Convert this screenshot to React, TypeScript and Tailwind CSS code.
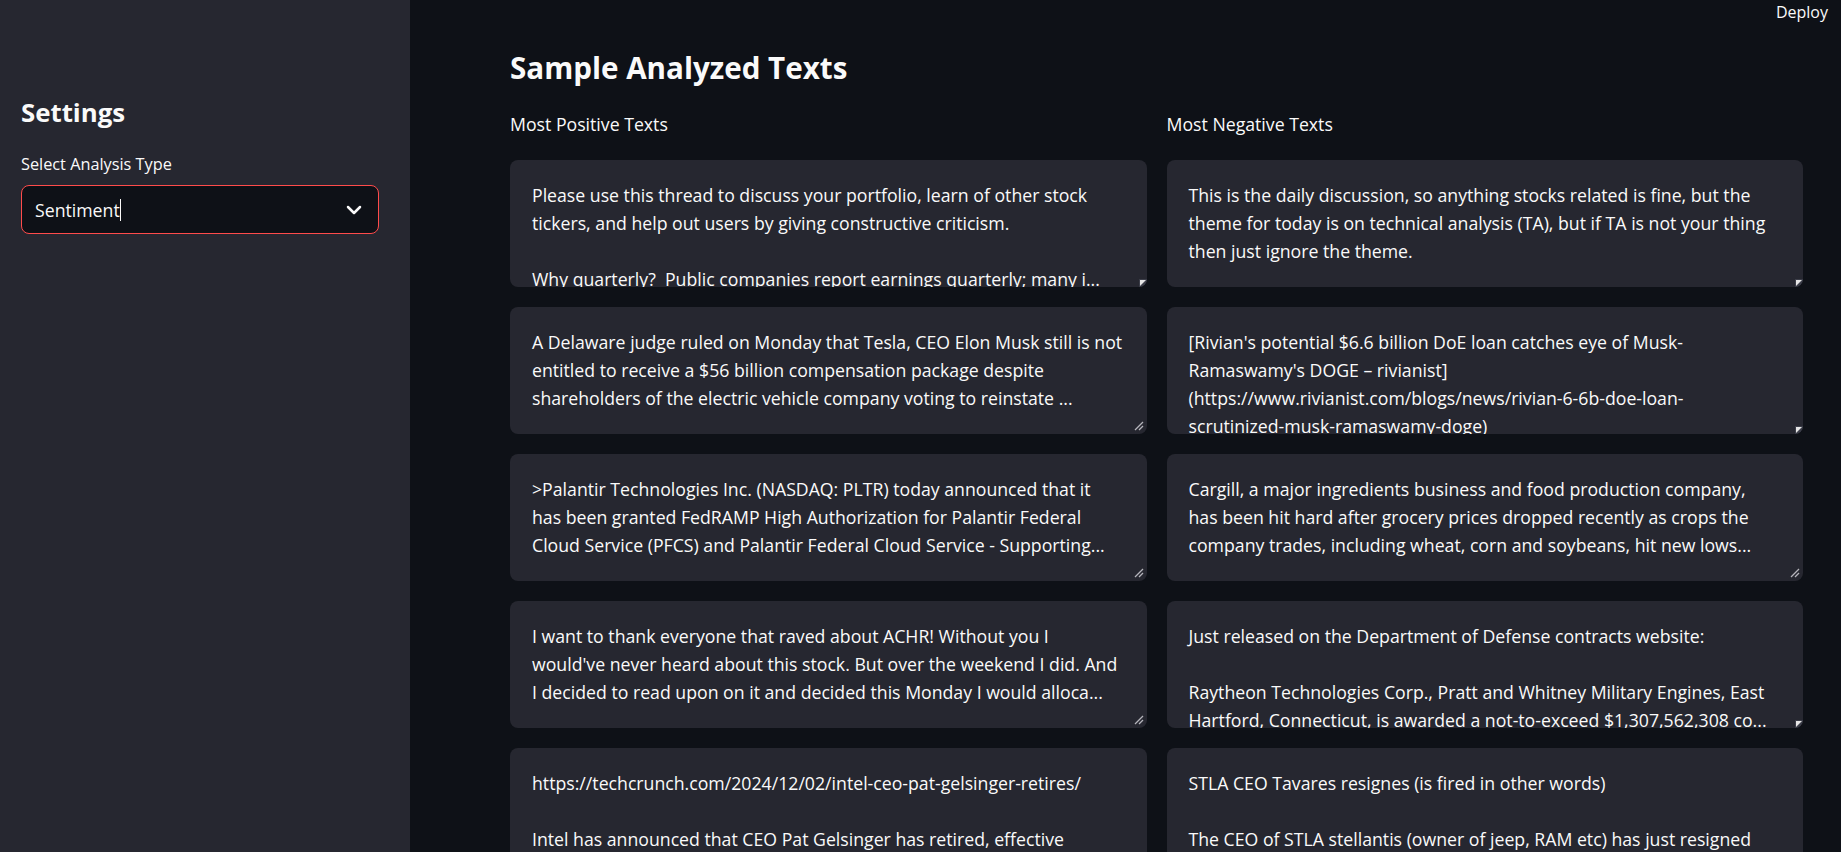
import { ChevronDown } from 'lucide-react'

type Sample = { lines: string[]; handle: 'tri' | 'grip' }

const positive: Sample[] = [
  {
    lines: [
      'Please use this thread to discuss your portfolio, learn of other stock',
      'tickers, and help out users by giving constructive criticism.',
      '',
      'Why quarterly?  Public companies report earnings quarterly; many i...',
    ],
    handle: 'tri',
  },
  {
    lines: [
      'A Delaware judge ruled on Monday that Tesla, CEO Elon Musk still is not',
      'entitled to receive a $56 billion compensation package despite',
      'shareholders of the electric vehicle company voting to reinstate ...',
    ],
    handle: 'grip',
  },
  {
    lines: [
      '>Palantir Technologies Inc. (NASDAQ: PLTR) today announced that it',
      'has been granted FedRAMP High Authorization for Palantir Federal',
      'Cloud Service (PFCS) and Palantir Federal Cloud Service - Supporting...',
    ],
    handle: 'grip',
  },
  {
    lines: [
      'I want to thank everyone that raved about ACHR! Without you I',
      "would've never heard about this stock. But over the weekend I did. And",
      'I decided to read upon on it and decided this Monday I would alloca...',
    ],
    handle: 'grip',
  },
  {
    lines: [
      'https://techcrunch.com/2024/12/02/intel-ceo-pat-gelsinger-retires/',
      '',
      'Intel has announced that CEO Pat Gelsinger has retired, effective',
      'December 1, 2024.',
    ],
    handle: 'tri',
  },
]

const negative: Sample[] = [
  {
    lines: [
      'This is the daily discussion, so anything stocks related is fine, but the',
      'theme for today is on technical analysis (TA), but if TA is not your thing',
      'then just ignore the theme.',
    ],
    handle: 'tri',
  },
  {
    lines: [
      "[Rivian's potential $6.6 billion DoE loan catches eye of Musk-",
      "Ramaswamy's DOGE – rivianist]",
      '(https://www.rivianist.com/blogs/news/rivian-6-6b-doe-loan-',
      'scrutinized-musk-ramaswamy-doge)',
    ],
    handle: 'tri',
  },
  {
    lines: [
      'Cargill, a major ingredients business and food production company,',
      'has been hit hard after grocery prices dropped recently as crops the',
      'company trades, including wheat, corn and soybeans, hit new lows...',
    ],
    handle: 'grip',
  },
  {
    lines: [
      'Just released on the Department of Defense contracts website:',
      '',
      'Raytheon Technologies Corp., Pratt and Whitney Military Engines, East',
      'Hartford, Connecticut, is awarded a not-to-exceed $1,307,562,308 co...',
    ],
    handle: 'tri',
  },
  {
    lines: [
      'STLA CEO Tavares resignes (is fired in other words)',
      '',
      'The CEO of STLA stellantis (owner of jeep, RAM etc) has just resigned',
      'effective immediately.',
    ],
    handle: 'tri',
  },
]

function ResizeHandle({ kind }: { kind: 'tri' | 'grip' }) {
  if (kind === 'tri') {
    return (
      <svg width="8" height="8" viewBox="0 0 8 8" className="absolute right-0 bottom-0">
        <rect x="0" y="0" width="8" height="8" fill="#3b3d48" />
        <polygon points="1,1 7,1 1,7" fill="#e6e6e6" />
      </svg>
    )
  }
  return (
    <svg width="10" height="10" viewBox="0 0 10 10" className="absolute right-[3px] bottom-[3px]">
      <line x1="1" y1="9" x2="9" y2="1" stroke="#b5b5bb" strokeWidth="1.2" />
      <line x1="5" y1="9" x2="9" y2="5" stroke="#b5b5bb" strokeWidth="1.2" />
    </svg>
  )
}

function TextCard({ sample }: { sample: Sample }) {
  return (
    <div className="relative h-[127px] rounded-lg bg-[#262730] overflow-hidden shrink-0">
      <div className="pt-[21px] pl-[22px] pr-4 text-[17.7px] leading-[28.2px] text-[#fafafa]">
        {sample.lines.map((line, i) => (
          <div key={i} className="whitespace-pre h-[28.2px]">{line}</div>
        ))}
      </div>
      <ResizeHandle kind={sample.handle} />
    </div>
  )
}

function Column({ title, items }: { title: string; items: Sample[] }) {
  return (
    <div className="flex flex-col min-w-0">
      <p className="text-[17.7px] leading-[28px] text-[#fafafa] mt-[24px]">{title}</p>
      <div className="flex flex-col gap-[20px] mt-[22px]">
        {items.map((s, i) => (
          <TextCard key={i} sample={s} />
        ))}
      </div>
    </div>
  )
}

export default function App() {
  return (
    <div
      className="relative flex h-screen overflow-hidden bg-[#0e1117] text-[#fafafa]"
      style={{ fontFamily: '"Open Sans", "Noto Sans", sans-serif' }}
    >
      {/* Sidebar */}
      <aside className="w-[410px] shrink-0 bg-[#262730] pl-[21px] pt-[97px]">
        <h2 className="text-[25.8px] leading-[31px] font-bold">Settings</h2>
        <label className="block mt-[26px] text-[16.3px] leading-[20px]">Select Analysis Type</label>
        <div className="mt-[11px] w-[358px] h-[49px] rounded-lg border border-[#ff4b4b] bg-[#0e1117] flex items-center justify-between pl-[13px] pr-[12px]">
          <div className="flex items-center text-[17.7px] leading-[28px]">
            <span>Sentiment</span>
            <span className="inline-block w-px h-[22px] bg-[#fafafa]" />
          </div>
          <ChevronDown size={24} strokeWidth={2.5} className="text-[#fafafa]" />
        </div>
      </aside>

      {/* Main */}
      <main className="flex-1 min-w-0 pl-[100px] pr-[38px] pt-[50px]">
        <h1 className="text-[29.6px] leading-[35.5px] font-bold">Sample Analyzed Texts</h1>
        <div className="grid grid-cols-2 gap-x-[20px]">
          <Column title="Most Positive Texts" items={positive} />
          <Column title="Most Negative Texts" items={negative} />
        </div>
      </main>

      {/* Header toolbar */}
      <div className="absolute top-[2px] right-[13px] text-[16px] leading-[20px] text-[#fafafa]">Deploy</div>
    </div>
  )
}
